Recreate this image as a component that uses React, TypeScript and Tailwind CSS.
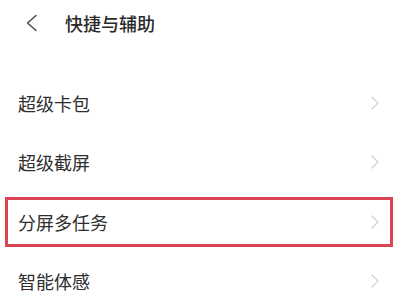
import React from 'react';

const items = ['超级卡包', '超级截屏', '分屏多任务', '智能体感'];

const ChevronRight = () => (
    <svg width="8" height="14" viewBox="0 0 8 14" fill="none">
        <path d="M1 1l6 6-6 6" stroke="#cfcfcf" strokeWidth="1.2" strokeLinecap="round" strokeLinejoin="round" />
    </svg>
);

const App: React.FC = () => {
    return (
        <div
            className="w-[400px] h-[300px] bg-white overflow-hidden text-[#333]"
            style={{ fontFamily: '"Noto Sans CJK SC", "Noto Sans", sans-serif' }}
        >
            {/* Header */}
            <div className="h-[45px] flex items-center">
                <div className="pl-[25px] w-[65px] flex items-center">
                    <svg width="13" height="18" viewBox="0 0 13 18" fill="none">
                        <path d="M11 1.5L2.5 9l8.5 7.5" stroke="#444" strokeWidth="1.4" strokeLinecap="round" strokeLinejoin="round" />
                    </svg>
                </div>
                <span className="text-[18px] leading-none font-medium text-[#2a2a2a]">快捷与辅助</span>
            </div>

            {/* List */}
            <div className="pt-[28px]">
                {items.map((label, i) => (
                    <div key={label} className="relative h-[59.5px] flex items-center justify-between pl-[18px] pr-[21px]">
                        <span className="text-[18px] leading-none text-[#2e2e2e]">{label}</span>
                        <ChevronRight />
                        {i === 2 && (
                            <div className="absolute left-[5px] right-[7px] top-[5px] bottom-[4.5px] border-[3px] border-[#dc4454]" />
                        )}
                    </div>
                ))}
            </div>
        </div>
    );
};

export default App;
